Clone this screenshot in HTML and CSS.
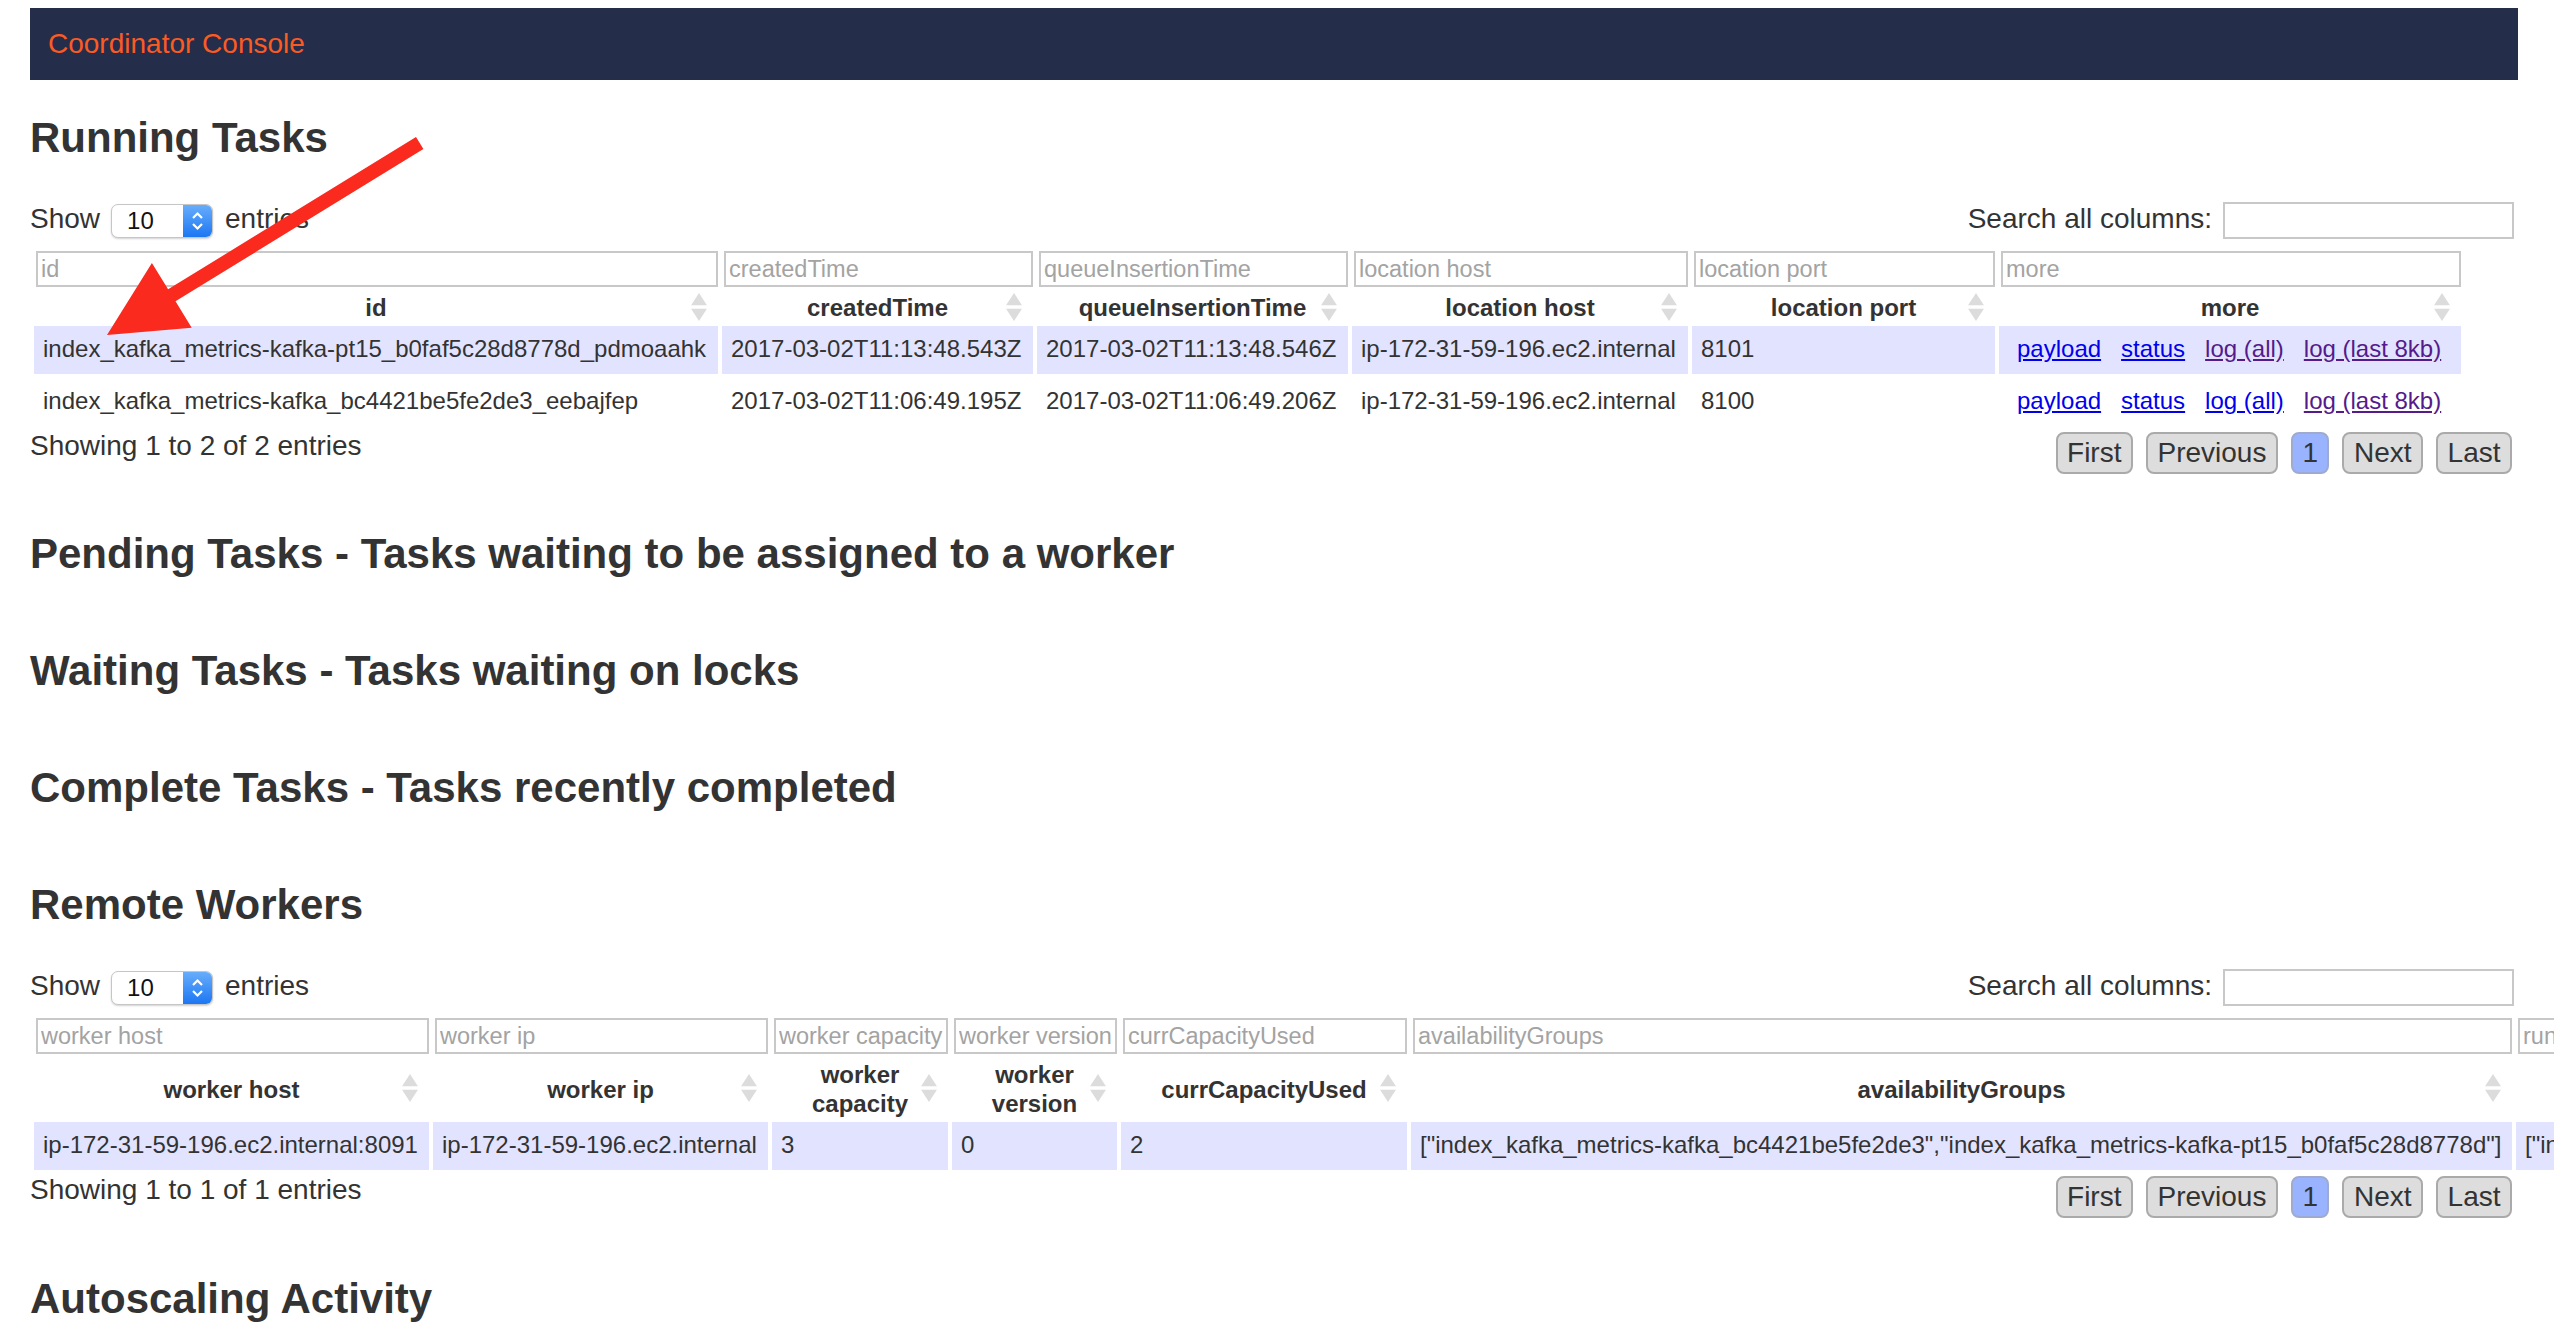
FILE: index.html
```html
<!DOCTYPE html>
<html lang="en">
<head>
<meta charset="utf-8">
<title>Coordinator Console</title>
<link rel="stylesheet" href="styles.css">
</head>
<body>
<header class="topbar">Coordinator Console</header>
<main class="content">
  <section class="section">
    <h2 class="title">Running Tasks</h2>
    <div class="controls">
      <div class="length">Show<div class="select"><span class="select-value">10</span><span class="select-arrows"><svg width="29" height="34" viewBox="0 0 29 34"><polyline points="10,14 14.5,9.5 19,14" fill="none" stroke="#fff" stroke-width="2.2"/><polyline points="10,20 14.5,24.5 19,20" fill="none" stroke="#fff" stroke-width="2.2"/></svg></span></div>entries</div>
      <div class="search">Search all columns:<input class="search-input" type="text"></div>
    </div>
    <table class="grid grid-tasks">
      <colgroup><col class="t1"><col class="t2"><col class="t3"><col class="t4"><col class="t5"><col class="t6"></colgroup>
      <thead>
        <tr class="filters">
          <td><input class="filter" placeholder="id"></td>
          <td><input class="filter" placeholder="createdTime"></td>
          <td><input class="filter" placeholder="queueInsertionTime"></td>
          <td><input class="filter" placeholder="location host"></td>
          <td><input class="filter" placeholder="location port"></td>
          <td><input class="filter" placeholder="more"></td>
        </tr>
        <tr class="heads">
          <th>id<svg class="sort" viewBox="0 0 17 30"><polygon points="8.5,0 17,13 0,13"/><polygon points="0,17 17,17 8.5,30"/></svg></th>
          <th>createdTime<svg class="sort" viewBox="0 0 17 30"><polygon points="8.5,0 17,13 0,13"/><polygon points="0,17 17,17 8.5,30"/></svg></th>
          <th>queueInsertionTime<svg class="sort" viewBox="0 0 17 30"><polygon points="8.5,0 17,13 0,13"/><polygon points="0,17 17,17 8.5,30"/></svg></th>
          <th>location host<svg class="sort" viewBox="0 0 17 30"><polygon points="8.5,0 17,13 0,13"/><polygon points="0,17 17,17 8.5,30"/></svg></th>
          <th>location port<svg class="sort" viewBox="0 0 17 30"><polygon points="8.5,0 17,13 0,13"/><polygon points="0,17 17,17 8.5,30"/></svg></th>
          <th>more<svg class="sort" viewBox="0 0 17 30"><polygon points="8.5,0 17,13 0,13"/><polygon points="0,17 17,17 8.5,30"/></svg></th>
        </tr>
      </thead>
      <tbody>
        <tr class="odd">
          <td>index_kafka_metrics-kafka-pt15_b0faf5c28d8778d_pdmoaahk</td>
          <td>2017-03-02T11:13:48.543Z</td>
          <td>2017-03-02T11:13:48.546Z</td>
          <td>ip-172-31-59-196.ec2.internal</td>
          <td>8101</td>
          <td class="links"><a href="#">payload</a><a href="#">status</a><a href="#" class="visited">log (all)</a><a href="#" class="visited">log (last 8kb)</a></td>
        </tr>
        <tr class="even">
          <td>index_kafka_metrics-kafka_bc4421be5fe2de3_eebajfep</td>
          <td>2017-03-02T11:06:49.195Z</td>
          <td>2017-03-02T11:06:49.206Z</td>
          <td>ip-172-31-59-196.ec2.internal</td>
          <td>8100</td>
          <td class="links"><a href="#">payload</a><a href="#">status</a><a href="#">log (all)</a><a href="#" class="visited">log (last 8kb)</a></td>
        </tr>
      </tbody>
    </table>
    <div class="footer">
      <div class="info">Showing 1 to 2 of 2 entries</div>
      <div class="pager"><span class="btn">First</span><span class="btn">Previous</span><span class="btn active">1</span><span class="btn">Next</span><span class="btn">Last</span></div>
    </div>
  </section>

  <section class="section empty">
    <h2 class="title">Pending Tasks - Tasks waiting to be assigned to a worker</h2>
  </section>
  <section class="section empty">
    <h2 class="title">Waiting Tasks - Tasks waiting on locks</h2>
  </section>
  <section class="section empty">
    <h2 class="title">Complete Tasks - Tasks recently completed</h2>
  </section>

  <section class="section">
    <h2 class="title">Remote Workers</h2>
    <div class="controls">
      <div class="length">Show<div class="select"><span class="select-value">10</span><span class="select-arrows"><svg width="29" height="34" viewBox="0 0 29 34"><polyline points="10,14 14.5,9.5 19,14" fill="none" stroke="#fff" stroke-width="2.2"/><polyline points="10,20 14.5,24.5 19,20" fill="none" stroke="#fff" stroke-width="2.2"/></svg></span></div>entries</div>
      <div class="search">Search all columns:<input class="search-input" type="text"></div>
    </div>
    <table class="grid grid-workers">
      <colgroup><col class="w1"><col class="w2"><col class="w3"><col class="w4"><col class="w5"><col class="w6"><col class="w7"></colgroup>
      <thead>
        <tr class="filters">
          <td><input class="filter" placeholder="worker host"></td>
          <td><input class="filter" placeholder="worker ip"></td>
          <td><input class="filter" placeholder="worker capacity"></td>
          <td><input class="filter" placeholder="worker version"></td>
          <td><input class="filter" placeholder="currCapacityUsed"></td>
          <td><input class="filter" placeholder="availabilityGroups"></td>
          <td><input class="filter" placeholder="runningTasks"></td>
        </tr>
        <tr class="heads">
          <th>worker host<svg class="sort" viewBox="0 0 17 30"><polygon points="8.5,0 17,13 0,13"/><polygon points="0,17 17,17 8.5,30"/></svg></th>
          <th>worker ip<svg class="sort" viewBox="0 0 17 30"><polygon points="8.5,0 17,13 0,13"/><polygon points="0,17 17,17 8.5,30"/></svg></th>
          <th>worker capacity<svg class="sort" viewBox="0 0 17 30"><polygon points="8.5,0 17,13 0,13"/><polygon points="0,17 17,17 8.5,30"/></svg></th>
          <th>worker version<svg class="sort" viewBox="0 0 17 30"><polygon points="8.5,0 17,13 0,13"/><polygon points="0,17 17,17 8.5,30"/></svg></th>
          <th>currCapacityUsed<svg class="sort" viewBox="0 0 17 30"><polygon points="8.5,0 17,13 0,13"/><polygon points="0,17 17,17 8.5,30"/></svg></th>
          <th>availabilityGroups<svg class="sort" viewBox="0 0 17 30"><polygon points="8.5,0 17,13 0,13"/><polygon points="0,17 17,17 8.5,30"/></svg></th>
          <th>runningTasks<svg class="sort" viewBox="0 0 17 30"><polygon points="8.5,0 17,13 0,13"/><polygon points="0,17 17,17 8.5,30"/></svg></th>
        </tr>
      </thead>
      <tbody>
        <tr class="odd">
          <td>ip-172-31-59-196.ec2.internal:8091</td>
          <td>ip-172-31-59-196.ec2.internal</td>
          <td>3</td>
          <td>0</td>
          <td>2</td>
          <td>["index_kafka_metrics-kafka_bc4421be5fe2de3","index_kafka_metrics-kafka-pt15_b0faf5c28d8778d"]</td>
          <td>["index_kafka_metrics-kafka-pt15_b0faf5c28d8778d_pdmoaahk","index_kafka_metrics-kafka_bc4421be5fe2de3_eebajfep"]</td>
        </tr>
      </tbody>
    </table>
    <div class="footer">
      <div class="info">Showing 1 to 1 of 1 entries</div>
      <div class="pager"><span class="btn">First</span><span class="btn">Previous</span><span class="btn active">1</span><span class="btn">Next</span><span class="btn">Last</span></div>
    </div>
  </section>

  <section class="section last">
    <h2 class="title">Autoscaling Activity</h2>
  </section>
</main>
<svg class="annotation" width="500" height="400" viewBox="0 0 500 400">
  <polygon points="107,335 151.9,262.9 168.1,289.3 416,137.1 423.4,149.1 175.5,301.3 191.7,327.7" fill="#fa2a1e"/>
</svg>
</body>
</html>
```
FILE: styles.css
```css
html {
  overflow: hidden;
}

body {
  margin: 0;
  position: relative;
  font-family: "Liberation Sans", Arial, Helvetica, sans-serif;
  font-size: 28px;
  color: #333;
  background: #fff;
}

.topbar {
  margin: 8px 36px 0 30px;
  height: 72px;
  line-height: 72px;
  padding-left: 18px;
  background: #242d4a;
  color: #fb5b22;
  font-size: 28px;
}

.content {
  margin: 0 40px 0 30px;
}

.section {
  margin-top: 56px;
}

.section:first-child {
  margin-top: 34px;
}

.section.empty + .section {
  margin-top: 69px;
}

.section.last {
  margin-top: 57px;
}

.title {
  margin: 0;
  font-size: 42px;
  line-height: 48px;
  font-weight: bold;
  color: #333;
}

.controls {
  display: flex;
  justify-content: space-between;
  align-items: flex-start;
  margin-top: 37px;
  height: 40px;
  line-height: 40px;
}

.length,
.search {
  display: flex;
  align-items: flex-start;
}

.select {
  display: flex;
  box-sizing: border-box;
  width: 102px;
  height: 34px;
  margin: 5px 12px 0 11px;
  border: 1px solid #c6c6c6;
  border-radius: 7px;
  background: #fff;
  overflow: hidden;
  box-shadow: 0 1px 2px rgba(0, 0, 0, 0.18);
}

.select-value {
  flex: 1;
  padding-left: 15px;
  font-size: 24px;
  line-height: 32px;
  color: #111;
}

.select-arrows {
  display: flex;
  align-items: center;
  justify-content: center;
  width: 29px;
  background: linear-gradient(#68adfb, #1c77f3);
}

.search-input {
  box-sizing: border-box;
  width: 291px;
  height: 37px;
  margin: 3px 0 0 11px;
  border: 2px solid #c8c8c8;
  font: inherit;
  font-size: 24px;
  outline: none;
}

.grid {
  border-collapse: separate;
  border-spacing: 4px;
  table-layout: fixed;
  margin-top: 8px;
  font-size: 24px;
}

.grid-tasks {
  width: 2435px;
}

.grid-workers {
  width: 3790px;
}

.t1 { width: 684px; }
.t2 { width: 311px; }
.t3 { width: 311px; }
.t4 { width: 336px; }
.t5 { width: 303px; }
.t6 { width: 462px; }

.w1 { width: 395px; }
.w2 { width: 335px; }
.w3 { width: 176px; }
.w4 { width: 165px; }
.w5 { width: 286px; }
.w6 { width: 1101px; }
.w7 { width: 1300px; }

.grid td {
  padding: 9px 9px 11px;
  line-height: 28px;
  white-space: nowrap;
  overflow: hidden;
}

.grid .filters td {
  padding: 0;
  height: 36px;
}

.filter {
  display: block;
  box-sizing: border-box;
  width: calc(100% - 2px);
  height: 36px;
  margin: 0 0 0 2px;
  padding: 0 0 0 3px;
  border: 2px solid #c8c8c8;
  font-family: inherit;
  font-size: 23.5px;
  color: #333;
  outline: none;
}

.filter::placeholder {
  color: #a3a3a3;
}

.grid th {
  position: relative;
  padding: 2px 8px 0;
  line-height: 29px;
  font-weight: bold;
  text-align: center;
  vertical-align: middle;
}

.grid-workers th {
  padding-top: 2px;
}

.sort {
  position: absolute;
  right: 11px;
  top: 50%;
  width: 16px;
  height: 28px;
  transform: translateY(-50%);
  fill: #dcdcdc;
}

.odd td {
  background: #e2e4ff;
}

.grid td.links {
  padding-left: 18px;
}

a {
  color: #0000ee;
}

a.visited {
  color: #551a8b;
}

.links a + a {
  margin-left: 20px;
}

.footer {
  display: flex;
  justify-content: space-between;
  align-items: flex-start;
}

.info {
  line-height: 32px;
}

.pager {
  display: flex;
  margin: 2px 2px 0 0;
}

.btn {
  box-sizing: border-box;
  height: 42px;
  margin-left: 13px;
  padding: 0 9.5px;
  border: 2px solid #aaa;
  border-radius: 8px;
  background: #ddd;
  line-height: 38px;
  color: #333;
}

.btn.active {
  background: #99b3ff;
  border-color: #9eaad0;
}

.annotation {
  position: absolute;
  top: 0;
  left: 0;
  pointer-events: none;
}
```
